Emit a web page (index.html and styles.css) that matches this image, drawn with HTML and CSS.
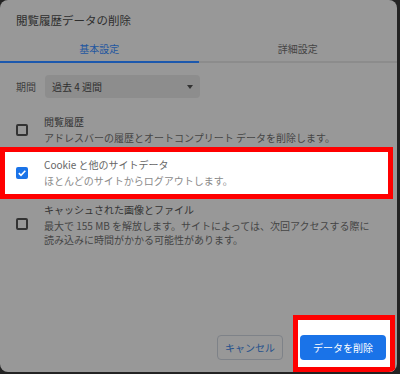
FILE: index.html
```html
<!DOCTYPE html>
<html lang="ja">
<head>
<meta charset="UTF-8">
<meta name="viewport" content="width=device-width, initial-scale=1.0">
<title>閲覧履歴データの削除</title>
<link rel="stylesheet" href="styles.css">
</head>
<body>
    <div class="dialog">
        <div class="dialog-title">閲覧履歴データの削除</div>

        <div class="tabs">
            <div class="tab active">基本設定</div>
            <div class="tab">詳細設定</div>
        </div>

        <div class="period-row">
            <span class="period-label">期間</span>
            <div class="select">
                <span>過去 4 週間</span>
                <span class="arrow"></span>
            </div>
        </div>

        <div class="option">
            <span class="checkbox"></span>
            <div class="option-text">
                <div class="option-title">閲覧履歴</div>
                <div class="option-sub">アドレスバーの履歴とオートコンプリート データを削除します。</div>
            </div>
        </div>

        <div class="option highlight">
            <span class="checkbox checked">
                <svg width="10" height="10" viewBox="0 0 10 10"><path d="M1.8 5.2 L4 7.3 L8.3 2.8" fill="none" stroke="#fff" stroke-width="1.6"/></svg>
            </span>
            <div class="option-text">
                <div class="option-title">Cookie と他のサイトデータ</div>
                <div class="option-sub">ほとんどのサイトからログアウトします。</div>
            </div>
        </div>

        <div class="option option-cache">
            <span class="checkbox"></span>
            <div class="option-text">
                <div class="option-title">キャッシュされた画像とファイル</div>
                <div class="option-desc">
                    <div>最大で 155 MB を解放します。サイトによっては、次回アクセスする際に</div>
                    <div>読み込みに時間がかかる可能性があります。</div>
                </div>
            </div>
        </div>

        <div class="footer">
            <button class="btn btn-cancel">キャンセル</button>
            <div class="btn-highlight">
                <button class="btn btn-delete">データを削除</button>
            </div>
        </div>
    </div>
</body>
</html>
```

FILE: styles.css
```css
body {
    margin: 0;
    padding: 0;
    background-color: #232323;
    font-family: "Noto Sans CJK JP", "Noto Sans", sans-serif;
}

.dialog {
    width: 397px;
    height: 372px;
    background-color: #989898;
    border-radius: 8px;
    display: flex;
    flex-direction: column;
    overflow: hidden;
}

.dialog-title {
    padding: 12px 16px 0;
    font-size: 11.5px;
    line-height: 17px;
    color: #2e2e2e;
}

.tabs {
    display: grid;
    grid-template-columns: 1fr 1fr;
    margin-top: 13px;
}

.tab {
    text-align: center;
    font-size: 10px;
    line-height: 14px;
    padding-bottom: 5px;
    color: #444;
    border-bottom: 2px solid #8c8c8c;
}

.tab.active {
    color: #1f56a0;
    border-bottom-color: #1c58ad;
}

.period-row {
    display: flex;
    align-items: center;
    padding: 0 16px;
    margin-top: 12px;
}

.period-label {
    font-size: 10px;
    color: #3d3d3d;
    width: 29px;
}

.select {
    width: 155px;
    height: 23px;
    box-sizing: border-box;
    background-color: #8d8d8d;
    border-radius: 4px;
    display: flex;
    align-items: center;
    justify-content: space-between;
    padding: 0 7px;
    font-size: 10px;
    color: #2e2e2e;
}

.arrow {
    width: 0;
    height: 0;
    border-left: 3.5px solid transparent;
    border-right: 3.5px solid transparent;
    border-top: 4px solid #333;
}

.option {
    display: flex;
    align-items: center;
    padding: 0 16px;
    margin-top: 16px;
}

.checkbox {
    width: 12px;
    height: 12px;
    box-sizing: border-box;
    border: 2px solid #333;
    border-radius: 2px;
    flex-shrink: 0;
    margin-right: 16px;
    display: flex;
    align-items: center;
    justify-content: center;
}

.checkbox.checked {
    border: none;
    background-color: #1a73e8;
}

.option-title {
    font-size: 10px;
    line-height: 16px;
    color: #333;
}

.option-sub {
    font-size: 10px;
    line-height: 16px;
    color: #454545;
}

.option-desc {
    font-size: 10px;
    line-height: 13.5px;
    padding-top: 1px;
    color: #454545;
    white-space: nowrap;
}

.option.highlight {
    margin-top: 1px;
    width: 393px;
    box-sizing: border-box;
    background-color: #fff;
    border: 5px solid #f00;
    padding: 5px 11px;
}

.highlight .option-title {
    color: #666;
}

.highlight .option-sub {
    color: #8a8a8a;
}

.option-cache {
    margin-top: 3px;
}

.footer {
    margin-top: auto;
    display: flex;
    justify-content: flex-end;
    align-items: flex-end;
    padding-right: 2px;
}

.btn {
    font-family: "Noto Sans CJK JP", "Noto Sans", sans-serif;
    font-size: 10px;
    border-radius: 4px;
    height: 25px;
    padding: 0;
    cursor: pointer;
}

.btn-cancel {
    width: 66px;
    margin-right: 10px;
    margin-bottom: 12px;
    background: transparent;
    border: 1px solid #7e8288;
    color: #24508c;
}

.btn-highlight {
    background-color: #fff;
    border: 5px solid #f00;
    padding: 13px 4px 7px 2px;
    width: 86px;
}

.btn-delete {
    width: 86px;
    background-color: #1a73e8;
    border: none;
    color: #fff;
}
```
